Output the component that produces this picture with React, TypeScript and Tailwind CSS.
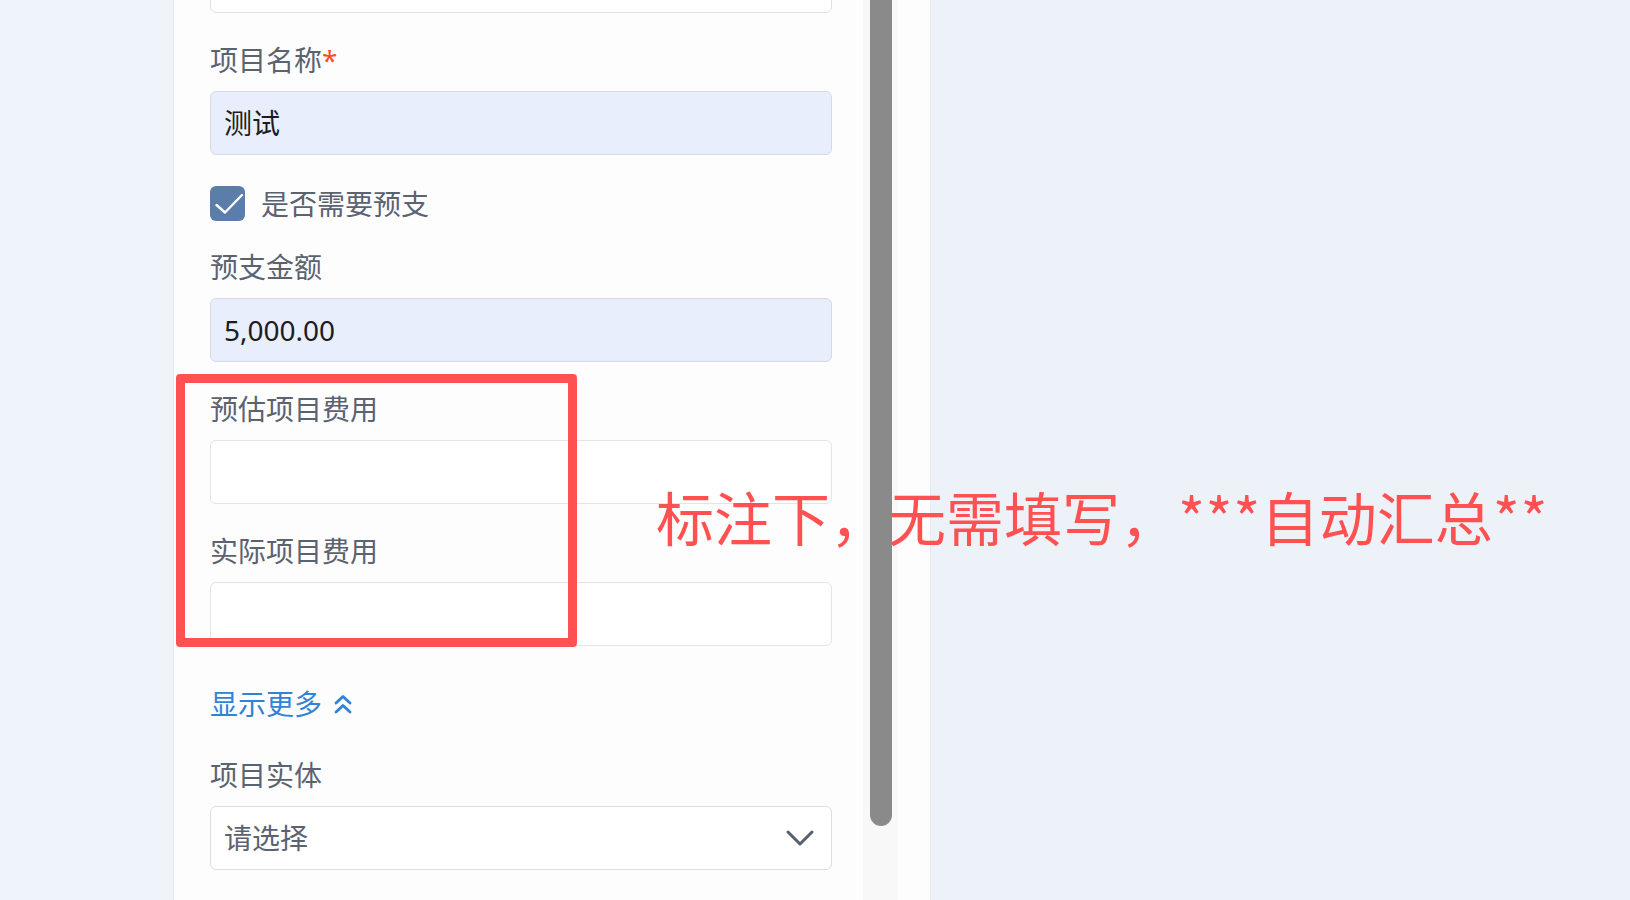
import { ReactNode } from "react";

const FONT = "font-['Noto_Sans','Noto_Sans_CJK_SC',sans-serif]";

function Label({ children }: { children: ReactNode }) {
  return (
    <div className="h-9 leading-9 text-[28px] text-[#5b6270] whitespace-nowrap">
      {children}
    </div>
  );
}

function Input({ value, filled }: { value?: string; filled?: boolean }) {
  return (
    <div
      className={
        filled
          ? "mt-[13px] h-16 rounded-[6px] border border-[#d6dbe3] bg-[#e8eefb] pl-[13px] flex items-center text-[28px] text-[#1c1c1e]"
          : "mt-[13px] h-16 rounded-[6px] border border-[#e1e4e9] bg-white pl-[13px] flex items-center text-[28px] text-[#1c1c1e]"
      }
    >
      {value}
    </div>
  );
}

function Checkbox() {
  return (
    <div className="w-[35px] h-[35px] rounded-[6px] bg-[#5a7ea9] flex items-center justify-center shrink-0">
      <svg width="35" height="35" viewBox="0 0 35 35" fill="none">
        <path
          d="M6.5 19 L15 26.5 L32 9"
          stroke="#fff"
          strokeWidth="2.4"
          strokeLinecap="round"
          strokeLinejoin="round"
        />
      </svg>
    </div>
  );
}

function ChevronsUp() {
  return (
    <svg width="18" height="22" viewBox="0 0 18 22" fill="none">
      <path d="M2 10 L9 3.5 L16 10" stroke="#2f83d8" strokeWidth="2.8" strokeLinecap="round" strokeLinejoin="round" />
      <path d="M2 19 L9 12.5 L16 19" stroke="#2f83d8" strokeWidth="2.8" strokeLinecap="round" strokeLinejoin="round" />
    </svg>
  );
}

function ChevronDown() {
  return (
    <svg width="30" height="18" viewBox="0 0 30 18" fill="none">
      <path d="M3 3 L15 15 L27 3" stroke="#56606c" strokeWidth="3" strokeLinecap="round" strokeLinejoin="round" />
    </svg>
  );
}

export default function App() {
  return (
    <div className={`relative flex h-[900px] w-full overflow-hidden bg-[#eff4fb] ${FONT}`}>
      <div className="w-[173px] shrink-0" />

      {/* form panel */}
      <div className="flex w-[758px] shrink-0 bg-[#fdfdfe] border-l border-[#e4e9f1]">
        <div className="w-[689px] shrink-0 pl-[36px] pr-[31px]">
          <div className="-mt-[51px] h-16 rounded-[6px] border border-[#dfe3e9] bg-white" />

          <div className="mt-[29px]">
            <Label>
              项目名称<span className="text-[#f4511e]">*</span>
            </Label>
            <Input value="测试" filled />
          </div>

          <div className="mt-[31px] flex items-center h-[35px]">
            <Checkbox />
            <span className="ml-[16px] text-[28px] text-[#5b6270] leading-9">是否需要预支</span>
          </div>

          <div className="mt-[28px]">
            <Label>预支金额</Label>
            <Input value="5,000.00" filled />
          </div>

          <div className="mt-[29px]">
            <Label>预估项目费用</Label>
            <Input />
          </div>

          <div className="mt-[29px]">
            <Label>实际项目费用</Label>
            <Input />
          </div>

          <div className="mt-[40px] h-9 flex items-center gap-[12px] text-[28px] text-[#2f83d8]">
            <span>显示更多</span>
            <ChevronsUp />
          </div>

          <div className="mt-[35px]">
            <Label>项目实体</Label>
            <div className="mt-[13px] h-16 rounded-[6px] border border-[#dadee5] bg-white pl-[13px] pr-[16px] flex items-center justify-between text-[28px] text-[#5b6270]">
              <span>请选择</span>
              <ChevronDown />
            </div>
          </div>
        </div>

        {/* scrollbar */}
        <div className="w-[35px] shrink-0 bg-[#f8f8f8] pl-[7px]">
          <div className="w-[22px] h-[826px] rounded-b-full bg-[#8a8a8a]" />
        </div>
        <div className="flex-1 border-r border-[#e6ebf2]" />
      </div>

      <div className="flex-1 bg-[#edf2f9]" />

      {/* annotation */}
      <div className="absolute left-[176px] top-[374px] w-[401px] h-[273px] rounded-[4px] border-[9px] border-[#ff5151]" />
      <div className="absolute left-[656px] top-[487px] text-[58px] leading-[58px] text-[#ff5151] whitespace-nowrap font-['Noto_Sans_CJK_SC',sans-serif]">
        标注下，无需填写，<span className="tracking-[0.5px]">***</span>自动汇总<span className="tracking-[0.5px]">**</span>
      </div>
    </div>
  );
}
